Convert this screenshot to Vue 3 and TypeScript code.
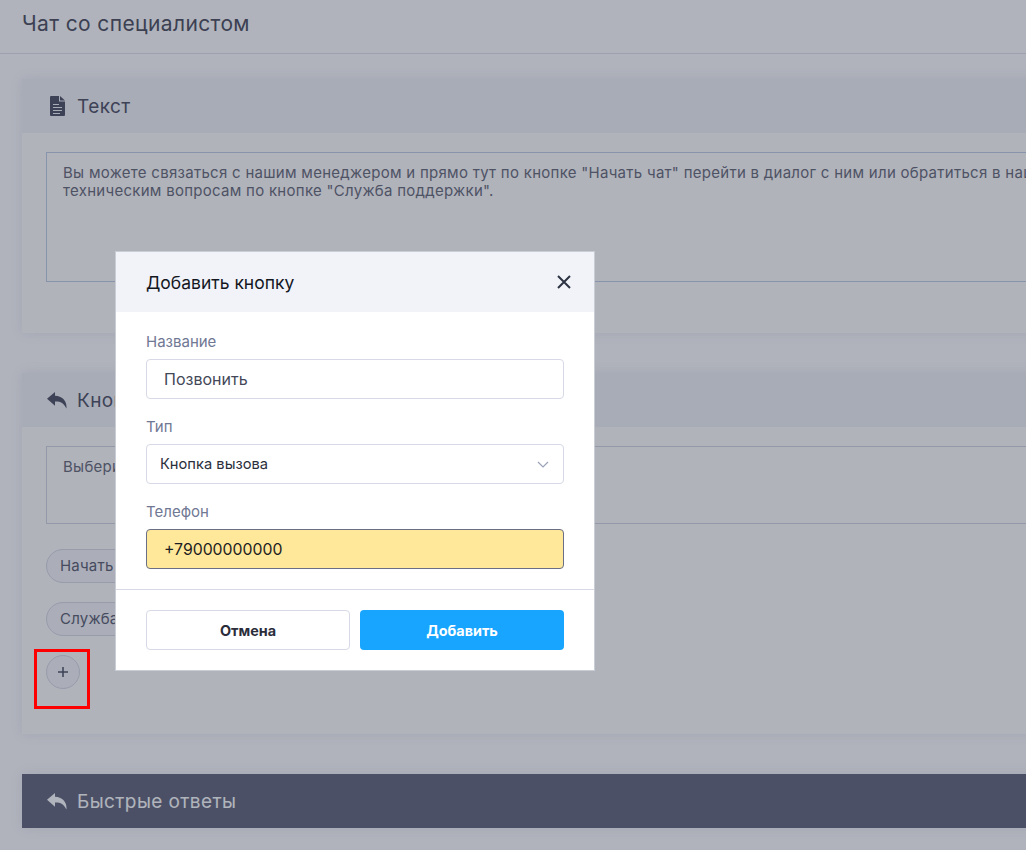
<script setup lang="ts">
const pills: string[] = ['Начать чат', 'Служба поддержки']
</script>

<template>
  <div class="viewport">
    <main class="page">
      <header class="topbar"><h1>Чат со специалистом</h1></header>
      <div class="content">
        <section class="card first">
          <div class="card-head">
            <span class="ic-box"><svg class="doc" viewBox="0 0 15 20"><path fill-rule="evenodd" d="M1 0h8v5.500h6V19a1 1 0 0 1-1 1H1a1 1 0 0 1-1-1V1a1 1 0 0 1 1-1zM10 0l5 4.500h-5zM3 8v1h6V8zm0 3v1h9v-1zm0 3v1h9v-1zm0 3v1h7v-1z"/></svg></span>
            <h2>Текст</h2>
          </div>
          <div class="card-body">
            <div class="area tall">Вы можете связаться с нашим менеджером и прямо тут по кнопке "Начать чат" перейти в диалог с ним или обратиться в нашу службу поддержки по<br>техническим вопросам по кнопке "Служба поддержки".</div>
          </div>
        </section>
        <section class="card second">
          <div class="card-head">
            <span class="ic-box"><svg class="reply" viewBox="0 0 20 17"><path d="M8 0 0 6.800l8 6.900V9.400c5.300-.2 8.800 1.400 11.400 7.100.9-7.300-3.700-12.300-11.400-12.800z"/></svg></span>
            <h2>Кнопки</h2>
          </div>
          <div class="card-body">
            <div class="area short">Выберите кнопки для чата</div>
            <div class="pills">
              <span v-for="p in pills" :key="p" class="pill">{{ p }}</span>
              <span class="add"><svg viewBox="0 0 11 11"><path d="M5.500 0v11M0 5.500h11"/></svg></span>
            </div>
          </div>
        </section>
        <section class="card third">
          <div class="card-head dark">
            <span class="ic-box"><svg class="reply" viewBox="0 0 20 17"><path d="M8 0 0 6.800l8 6.900V9.400c5.300-.2 8.800 1.400 11.400 7.100.9-7.300-3.700-12.300-11.400-12.800z"/></svg></span>
            <h2>Быстрые ответы</h2>
          </div>
        </section>
      </div>
    </main>

    <div class="overlay"></div>
    <span class="marker"></span>

    <div class="modal">
      <div class="modal-head">
        <span>Добавить кнопку</span>
        <svg class="close" viewBox="0 0 14 14"><path d="M1 1l12 12M13 1 1 13"/></svg>
      </div>
      <div class="modal-body">
        <label>Название</label>
        <div class="field value">Позвонить</div>
        <label>Тип</label>
        <div class="field select">
          <span>Кнопка вызова</span>
          <svg viewBox="0 0 12 7"><path d="M1 1l5 5 5-5"/></svg>
        </div>
        <label>Телефон</label>
        <div class="field value filled">+79000000000</div>
      </div>
      <div class="modal-foot">
        <button class="btn cancel">Отмена</button>
        <button class="btn ok">Добавить</button>
      </div>
    </div>
  </div>
</template>

<style>
html, body { margin: 0; height: 100%; overflow: hidden; }
</style>

<style scoped>
.viewport {
  position: relative;
  width: 1026px;
  height: 850px;
  overflow: hidden;
  font-family: Inter, "Noto Sans", sans-serif;
}
.page { width: 1400px; height: 850px; background: #f9fcff; }
.topbar { height: 46px; border-bottom: 1px solid #dde2ec; display: flex; align-items: center; padding: 0 0 7px 22px; }
h1 { margin: 0; font-size: 21px; font-weight: 400; letter-spacing: .38px; color: #474c5c; }
.content { padding: 25px 0 0 22px; }
.card { background: #fbfcfe; box-shadow: 0 0 12px rgba(60, 70, 100, .10); margin-bottom: 40px; }
.first { height: 254px; }
.second { height: 361px; }
.card-head { height: 54px; background: #edf1f8; display: flex; align-items: center; padding-left: 25px; gap: 10px; color: #4a4f65; }
.card-head.dark { background: #5f657b; color: #f9fdff; }
.card-head.dark .ic-box { fill: #f9fdff; }
h2 { margin: 0; font-size: 19px; font-weight: 400; letter-spacing: .4px; }
.ic-box { width: 20px; height: 20px; display: flex; align-items: center; justify-content: center; fill: #4a4f65; }
.reply { width: 20px; height: 17px; }
.doc { width: 15px; height: 20px; margin-left: 1px; }
.card-body { padding: 19px 0 0 24px; }
.area { border: 1px solid #bccde6; padding: 11px 16px; font-size: 15px; letter-spacing: .28px; line-height: 18px; color: #636979; box-sizing: border-box; }
.area.tall { height: 130px; }
.area.short { height: 78px; border-color: #cdd4e2; }
.pills { display: flex; flex-direction: column; align-items: flex-start; gap: 19px; margin-top: 25px; }
.pill { height: 34px; border: 1px solid #d3d8e4; background: #f1f4fa; border-radius: 17px; padding: 0 13px; line-height: 32px; font-size: 15px; letter-spacing: .2px; color: #565c70; box-sizing: border-box; }
.add { display: flex; width: 34px; height: 34px; border: 1px solid #d3d8e4; background: #f1f4fa; border-radius: 50%; align-items: center; justify-content: center; box-sizing: border-box; }
.add svg { width: 10px; height: 10px; fill: none; stroke: #4a4f65; stroke-width: 1.700; }
.overlay { position: absolute; inset: 0; background: rgba(40, 44, 62, .35); }
.marker { position: absolute; left: 34px; top: 649px; width: 56px; height: 60px; border: 3px solid #f00; box-sizing: border-box; }
.modal { position: absolute; left: 115px; top: 251px; width: 480px; height: 420px; box-sizing: border-box; background: #fff; border: 1px solid #c9cdd6; }
.modal-head { height: 60px; background: #f1f3f9; display: flex; align-items: center; justify-content: space-between; padding: 0 23px 0 30px; font-size: 17.500px; color: #15171f; }
.close { width: 14px; height: 14px; stroke: #2e3342; stroke-width: 2; fill: none; }
.modal-body { padding: 21px 30px 20px; }
label { display: block; font-size: 15px; line-height: 17px; color: #707893; margin-bottom: 9px; }
.field { height: 40px; box-sizing: border-box; border: 1px solid #d7d9e6; border-radius: 4px; display: flex; align-items: center; margin-bottom: 19px; }
.value { padding-left: 17px; font-size: 16px; color: #434858; }
.select { justify-content: space-between; padding: 0 14px 0 13px; font-size: 14.700px; color: #2b2f3c; }
.select svg { width: 12px; height: 7px; fill: none; stroke: #9aa2b8; stroke-width: 1.200; }
.filled { background: #ffe899; border-color: #6a6f85; color: #1c1d22; margin-bottom: 0; font-size: 15.800px; }
.modal-foot { border-top: 1px solid #d7d9e6; padding: 20px 30px; display: flex; gap: 10px; }
.btn { flex: none; width: 204px; height: 40px; border-radius: 4px; font-family: inherit; font-size: 14.400px; font-weight: 700; box-sizing: border-box; }
.cancel { background: #fff; border: 1px solid #d7d9e6; color: #2b2d3a; }
.ok { background: #17a5ff; border: 0; color: #fff; }
</style>
